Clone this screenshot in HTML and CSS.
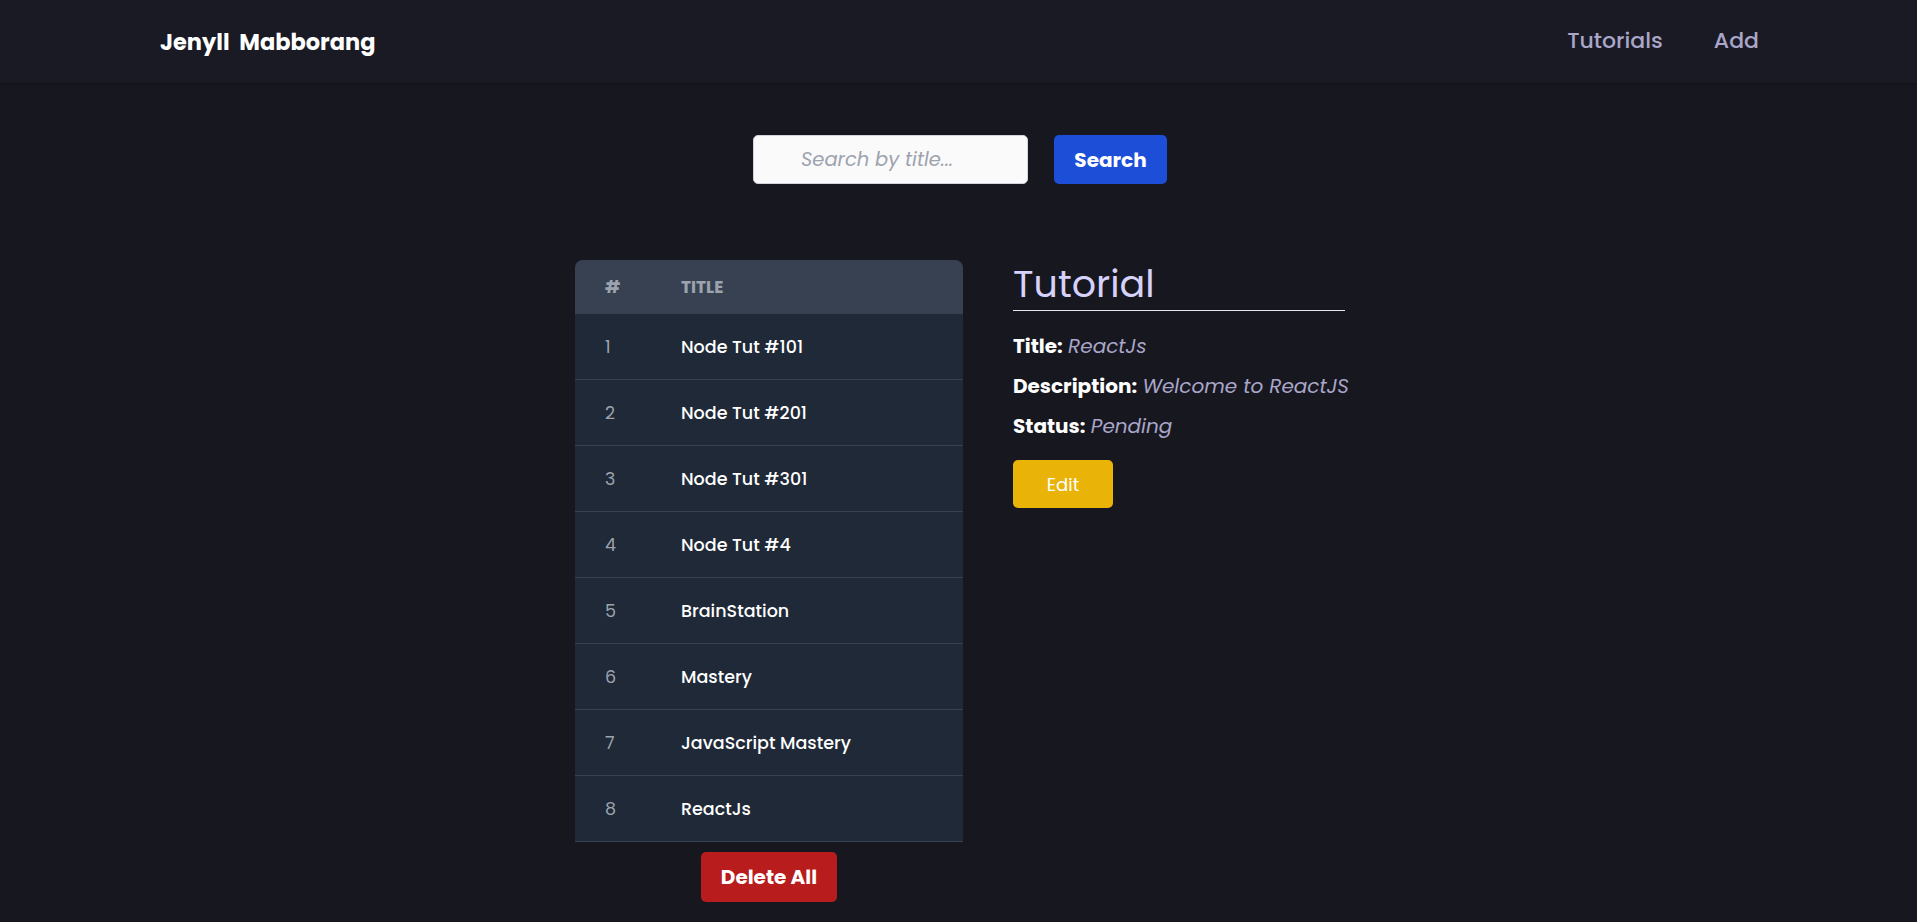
FILE: index.html
```html
<!DOCTYPE html>
<html lang="en">
<head>
<meta charset="utf-8">
<title>Tutorials</title>
<link rel="stylesheet" href="styles.css">
</head>
<body>
<nav class="navbar">
  <a class="brand" href="#">Jenyll Mabborang</a>
  <div class="nav-links">
    <a class="nav-link" href="#">Tutorials</a>
    <a class="nav-link" href="#">Add</a>
  </div>
</nav>
<main class="main">
  <div class="search-row">
    <input class="search-input" type="text" placeholder="Search by title...">
    <button class="btn btn-search" type="button">Search</button>
  </div>
  <div class="content">
    <div class="list-col">
      <table class="tut-table">
        <thead>
          <tr><th class="col-num">#</th><th class="col-title">Title</th></tr>
        </thead>
        <tbody>
          <tr><td class="col-num">1</td><td class="col-title">Node Tut #101</td></tr>
          <tr><td class="col-num">2</td><td class="col-title">Node Tut #201</td></tr>
          <tr><td class="col-num">3</td><td class="col-title">Node Tut #301</td></tr>
          <tr><td class="col-num">4</td><td class="col-title">Node Tut #4</td></tr>
          <tr><td class="col-num">5</td><td class="col-title">BrainStation</td></tr>
          <tr><td class="col-num">6</td><td class="col-title">Mastery</td></tr>
          <tr><td class="col-num">7</td><td class="col-title">JavaScript Mastery</td></tr>
          <tr><td class="col-num">8</td><td class="col-title">ReactJs</td></tr>
        </tbody>
      </table>
      <button class="btn btn-delete" type="button">Delete All</button>
    </div>
    <div class="detail">
      <h2 class="detail-heading">Tutorial</h2>
      <p class="detail-line"><span class="detail-label">Title:</span> <span class="detail-value">ReactJs</span></p>
      <p class="detail-line"><span class="detail-label">Description:</span> <span class="detail-value">Welcome to ReactJS</span></p>
      <p class="detail-line"><span class="detail-label">Status:</span> <span class="detail-value">Pending</span></p>
      <button class="btn btn-edit" type="button">Edit</button>
    </div>
  </div>
</main>
</body>
</html>
```
FILE: styles.css
```css
* { box-sizing: border-box; }
html, body { margin: 0; padding: 0; }
body {
  background: #17171f;
  color: #ffffff;
  font-family: "Poppins", "Open Sans", "DejaVu Sans", sans-serif;
  min-height: 922px;
}
a { text-decoration: none; }

.navbar {
  height: 83px;
  background: #1a1a24;
  display: flex;
  align-items: center;
  justify-content: space-between;
  padding: 0 158px 2px 160px;
  box-shadow: 0 1px 3px rgba(0,0,0,0.25);
}
.brand {
  color: #ffffff;
  font-weight: 700;
  font-size: 22.5px;
  word-spacing: 5px;
  padding-top: 2px;
}
.nav-links { display: flex; gap: 51px; }
.nav-link {
  color: #a9a6c9;
  font-size: 22px;
  font-weight: 500;
}

.main { padding-top: 52px; padding-left: 3px; }
.search-row {
  display: flex;
  justify-content: center;
  gap: 26px;
}
.search-input {
  width: 275px;
  height: 49px;
  border: 1px solid #d1d5db;
  border-radius: 5px;
  background: #fafafa;
  padding: 0 16px 0 47px;
  font-family: inherit;
  font-size: 19.5px;
  font-style: italic;
  color: #333;
  outline: none;
}
.search-input::placeholder { color: #9ca3af; font-style: italic; }

.btn {
  border: none;
  border-radius: 5px;
  color: #ffffff;
  font-family: inherit;
  cursor: pointer;
}
.btn-search {
  width: 113px;
  height: 49px;
  background: #1d4ed8;
  font-size: 20px;
  font-weight: 700;
}

.content {
  display: flex;
  justify-content: center;
  align-items: flex-start;
  gap: 50px;
  margin-top: 76px;
}
.list-col {
  width: 388px;
  display: flex;
  flex-direction: column;
  align-items: center;
}
.tut-table {
  width: 388px;
  border-collapse: separate;
  border-spacing: 0;
  border-radius: 8px 8px 0 0;
  overflow: hidden;
  background: #1f2937;
}
.tut-table thead th {
  background: #374151;
  height: 54px;
  text-align: left;
  color: #9ca3af;
  font-size: 17px;
  font-weight: 700;
  text-transform: uppercase;
  padding: 0;
}
.tut-table tbody td {
  height: 66px;
  border-bottom: 1px solid #374151;
  padding: 0;
  font-size: 17.5px;
}
.col-num { width: 106px; padding-left: 30px !important; }
td.col-num { color: #9ca3af; font-weight: 400; }
td.col-title { color: #ffffff; font-weight: 500; }

.btn-delete {
  margin-top: 10px;
  width: 136px;
  height: 50px;
  background: #b91c1c;
  font-size: 20px;
  font-weight: 700;
}

.detail { width: 332px; }
.detail-heading {
  margin: 0;
  color: #d6d2fc;
  font-size: 38px;
  font-weight: 400;
  line-height: 48px;
  border-bottom: 1px solid #e5e5ee;
  padding-bottom: 2px;
}
.detail-line {
  margin: 0;
  height: 40px;
  line-height: 40px;
  font-size: 20px;
  white-space: nowrap;
}
.detail-line:first-of-type { margin-top: 15px; }
.detail-label { font-weight: 700; color: #ffffff; }
.detail-value { font-style: italic; color: #a9a6c9; }
.btn-edit {
  margin-top: 14px;
  width: 100px;
  height: 48px;
  background: #eab308;
  font-size: 18px;
  font-weight: 400;
}
```
